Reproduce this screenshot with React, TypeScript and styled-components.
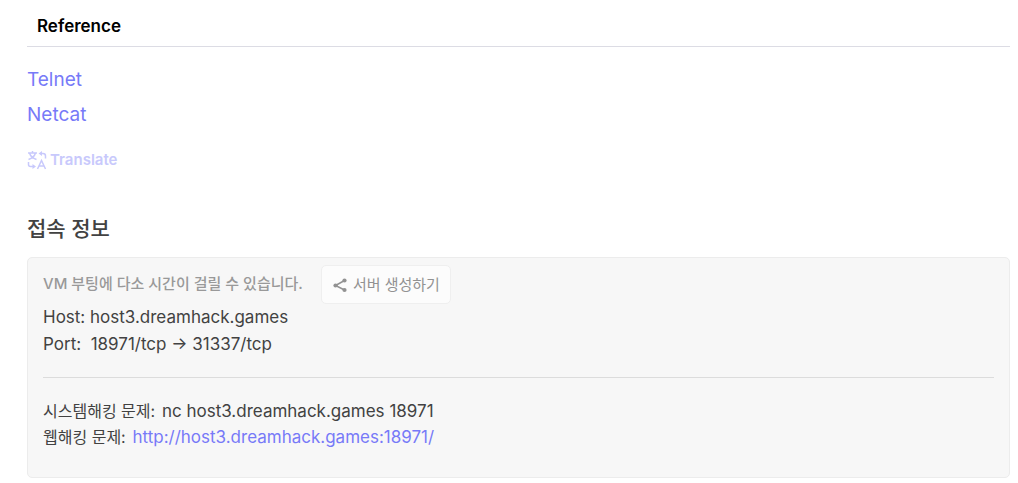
import React from "react";
import styled, { createGlobalStyle } from "styled-components";

const GlobalStyle = createGlobalStyle`
  * { box-sizing: border-box; }
  body {
    margin: 0;
    background: #fff;
    color: #424242;
    font-family: Inter, "Noto Sans CJK KR", sans-serif;
    font-size: 17px;
    line-height: 26px;
  }
`;

const Page = styled.main`
  padding: 12px 8px 5px 27px;
`;

const ReferenceTitle = styled.h2`
  margin: 0;
  padding: 0 10px 6px;
  border-bottom: 1px solid #dcdce4;
  color: #000;
  font-size: 17px;
  line-height: 28px;
  font-weight: 600;
`;

const ReferenceList = styled.ul`
  display: flex;
  flex-direction: column;
  align-items: flex-start;
  margin: 15px 0 0;
  padding: 0;
  list-style: none;
  font-size: 19px;
  line-height: 35px;
`;

const Link = styled.a`
  color: #777af8;
  text-decoration: none;
`;

const TranslateButton = styled.button`
  display: flex;
  align-items: center;
  gap: 3px;
  margin: 15px 0 0;
  padding: 0;
  border: 0;
  background: none;
  color: #c8c9fc;
  font: inherit;
  font-size: 15px;
  line-height: 26px;
  font-weight: 600;
`;

const SectionTitle = styled.h3`
  margin: 42px 0 14px;
  font-size: 21px;
  line-height: 28px;
  font-weight: 500;
`;

const Panel = styled.section`
  padding: 7px 15px 27px;
  border: 1px solid #ececec;
  border-radius: 5px;
  background: #f7f7f7;
`;

const BootRow = styled.div`
  display: flex;
  align-items: center;
  gap: 18px;
`;

const Notice = styled.span`
  padding-bottom: 2px;
  color: #999;
  font-size: 15px;
  font-weight: 500;
`;

const ServerButton = styled.button`
  display: flex;
  align-items: center;
  gap: 5px;
  height: 39px;
  padding: 0 10px;
  border: 1px solid #efefef;
  border-radius: 5px;
  background: #fcfcfc;
  color: #929292;
  font: inherit;
  font-size: 15px;
`;

const HostInfo = styled.div`
  line-height: 27px;
`;

const Line = styled.p`
  margin: 0;
  white-space: pre-wrap;
`;

const Label = styled.span`
  margin-right: 2px;
  font-size: 16px;
`;

const Divider = styled.hr`
  height: 1px;
  margin: 19px 0 20px;
  border: 0;
  background: #dcdcdc;
`;

const TranslateIcon = () => (
  <svg width="20" height="20" viewBox="0 0 20 20" fill="none" stroke="currentColor" strokeWidth="1.5" aria-hidden="true">
    <path d="M1 3h9M5.500 1v2M8.500 3C7.500 6.500 4.500 8.500 1.500 9.500M2.500 3C3.500 6.500 6.500 8.500 9.500 9.500" />
    <path d="M13.500 3.500H16a2.500 2.500 0 0 1 2.500 2.500v2.500" />
    <path d="M1.500 12v2.500a2 2 0 0 0 2 2h3" />
    <path d="M15 1v5l-3.500-2.500zM5.500 14v5L9 16.500z" fill="currentColor" stroke="none" />
    <path d="m10.500 19 4-8.500 4 8.500M12 16h5" />
  </svg>
);

const ShareIcon = () => (
  <svg width="16" height="16" viewBox="0 0 16 16" fill="currentColor" aria-hidden="true">
    <path d="M12.500 3.500 3.500 8.500 12.500 13" fill="none" stroke="currentColor" strokeWidth="1.500" />
    <circle cx="12.500" cy="3.500" r="2.100" />
    <circle cx="3.500" cy="8.500" r="2.100" />
    <circle cx="12.500" cy="13" r="2.100" />
  </svg>
);

export default function App() {
  return (
    <>
      <GlobalStyle />
      <Page>
        <ReferenceTitle>Reference</ReferenceTitle>
        <ReferenceList>
          <li><Link href="#telnet">Telnet</Link></li>
          <li><Link href="#netcat">Netcat</Link></li>
        </ReferenceList>
        <TranslateButton type="button">
          <TranslateIcon />
          Translate
        </TranslateButton>
        <SectionTitle>접속 정보</SectionTitle>
        <Panel>
          <BootRow>
            <Notice>VM 부팅에 다소 시간이 걸릴 수 있습니다.</Notice>
            <ServerButton type="button">
              <ShareIcon />
              서버 생성하기
            </ServerButton>
          </BootRow>
          <HostInfo>
            <Line>Host: host3.dreamhack.games</Line>
            <Line>{"Port:  18971/tcp → 31337/tcp"}</Line>
          </HostInfo>
          <Divider />
          <Line><Label>시스템해킹 문제:</Label> nc host3.dreamhack.games 18971</Line>
          <Line>
            <Label>웹해킹 문제:</Label> <Link href="http://host3.dreamhack.games:18971/">http://host3.dreamhack.games:18971/</Link>
          </Line>
        </Panel>
      </Page>
    </>
  );
}
